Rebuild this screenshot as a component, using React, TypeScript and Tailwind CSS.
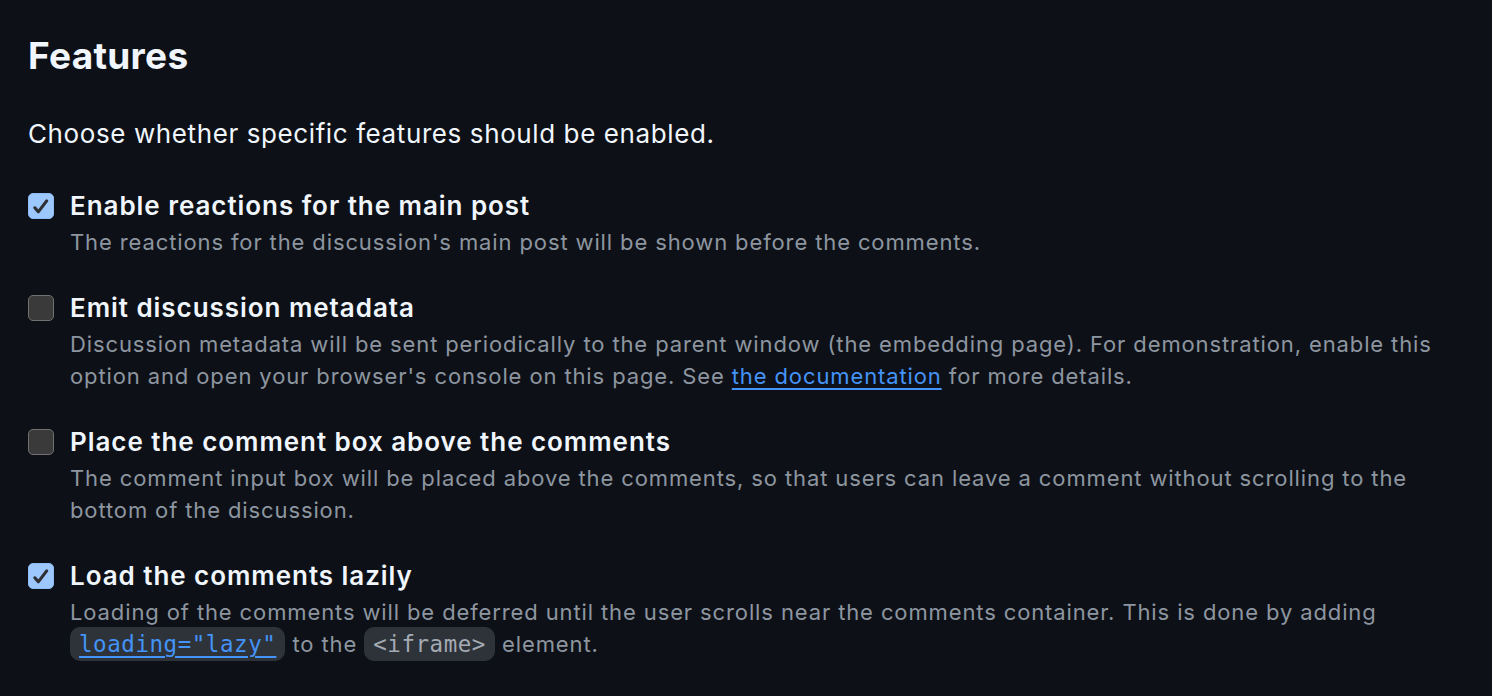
import React from 'react'

const CheckBox = ({ checked }: { checked: boolean }) =>
  checked ? (
    <div className="mt-[6px] h-[26px] w-[26px] shrink-0 overflow-hidden rounded-[5px] border border-[#8dbcf5] bg-[#9cc8fd]">
      <svg viewBox="0 0 16 16" className="h-full w-full">
        <path d="M3.9 9.2 6.2 11.9 11.8 4.6" fill="none" stroke="#2f3033" strokeWidth="2.1" strokeLinecap="round" strokeLinejoin="round" />
      </svg>
    </div>
  ) : (
    <div className="mt-[6px] h-[26px] w-[26px] shrink-0 rounded-[5px] border-[1.5px] border-[#707070] bg-[#3a3a3a]" />
  )

const Code = ({ children }: { children: React.ReactNode }) => (
  <code className="rounded-[10px] bg-[#2e333a] px-[9px] py-[4px] font-['DejaVu_Sans_Mono',monospace] text-[22.5px] tracking-[0.55px] text-[#a3aab2]">
    {children}
  </code>
)

const App = () => {
  const options = [
    {
      id: 'reactions',
      checked: true,
      title: 'Enable reactions for the main post',
      body: <>The reactions for the discussion's main post will be shown before the comments.</>,
    },
    {
      id: 'metadata',
      checked: false,
      title: 'Emit discussion metadata',
      body: (
        <>
          Discussion metadata will be sent periodically to the parent window (the embedding page). For demonstration, enable this
          option and open your browser's console on this page. See{' '}
          <a href="#" className="text-[#4493f8] underline underline-offset-[4px]">
            the documentation
          </a>{' '}
          for more details.
        </>
      ),
    },
    {
      id: 'input-top',
      checked: false,
      title: 'Place the comment box above the comments',
      body: (
        <>
          The comment input box will be placed above the comments, so that users can leave a comment without scrolling to the
          bottom of the discussion.
        </>
      ),
    },
    {
      id: 'lazy',
      checked: true,
      title: 'Load the comments lazily',
      body: (
        <>
          Loading of the comments will be deferred until the user scrolls near the comments container. This is done by adding{' '}
          <a href="#" className="text-[#4493f8] underline underline-offset-[4px]">
            <Code>
              <span className="text-[#4493f8]">loading="lazy"</span>
            </Code>
          </a>{' '}
          to the <Code>&lt;iframe&gt;</Code> element.
        </>
      ),
    },
  ]

  return (
    <div className="min-h-[696px] w-full bg-[#0d1117] px-[28px] pt-[32px] font-['Inter',sans-serif]">
      {/* Heading */}
      <h2 className="text-[37px] font-bold leading-[48px] tracking-[0.3px] text-[#f0f6fc]">Features</h2>
      <p className="mt-[34px] text-[26px] leading-[40px] tracking-[0.6px] text-[#f0f6fc]">
        Choose whether specific features should be enabled.
      </p>

      {/* Options */}
      <div className="mt-[33px] flex max-w-[1440px] flex-col gap-[31px]">
        {options.map((opt) => (
          <div key={opt.id} className="flex flex-row gap-[16px]">
            <CheckBox checked={opt.checked} />
            <div className="flex flex-col">
              <div className="text-[26px] font-semibold leading-[38px] tracking-[0.95px] text-[#f0f6fc]">{opt.title}</div>
              <div className="mt-[1px] text-[22px] leading-[32px] tracking-[0.88px] text-[#8d96a0]">{opt.body}</div>
            </div>
          </div>
        ))}
      </div>
    </div>
  )
}

export default App
